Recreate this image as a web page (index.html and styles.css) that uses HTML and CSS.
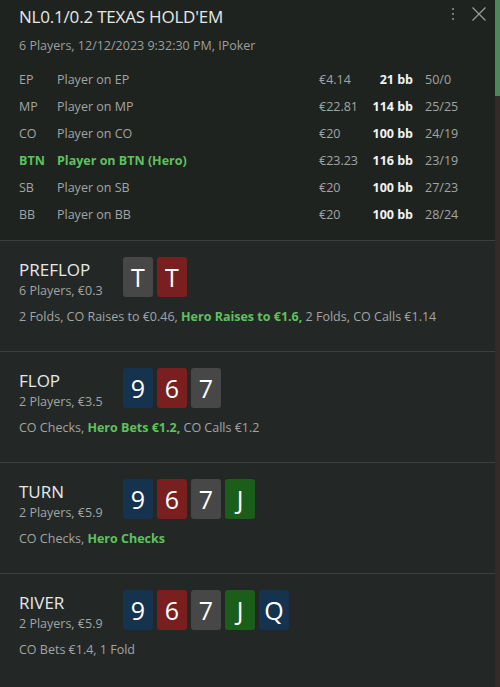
FILE: index.html
```html
<!DOCTYPE html>
<html lang="en">
<head>
  <meta charset="UTF-8">
  <title>Hand History</title>
  <link rel="stylesheet" href="styles.css">
</head>
<body>
  <div class="app">
    <div class="panel">
      <header class="hand-head">
        <div class="head-top">
          <h1>NL0.1/0.2 TEXAS HOLD'EM</h1>
          <div class="tools">
            <svg class="dots" width="4" height="14" viewBox="0 0 4 14"><circle cx="2" cy="2" r="1.1"/><circle cx="2" cy="7" r="1.1"/><circle cx="2" cy="12" r="1.1"/></svg>
            <svg class="close" width="16" height="16" viewBox="0 0 16 16"><path d="M1.5 1.5 L14.5 14.5 M14.5 1.5 L1.5 14.5"/></svg>
          </div>
        </div>
        <div class="meta">6 Players, 12/12/2023 9:32:30 PM, IPoker</div>

        <div class="seats">
          <div class="seat"><span>EP</span><span>Player on EP</span><span>€4.14</span><b>21 bb</b><span class="stat">50/0</span></div>
          <div class="seat"><span>MP</span><span>Player on MP</span><span>€22.81</span><b>114 bb</b><span class="stat">25/25</span></div>
          <div class="seat"><span>CO</span><span>Player on CO</span><span>€20</span><b>100 bb</b><span class="stat">24/19</span></div>
          <div class="seat hero"><span>BTN</span><span>Player on BTN (Hero)</span><span>€23.23</span><b>116 bb</b><span class="stat">23/19</span></div>
          <div class="seat"><span>SB</span><span>Player on SB</span><span>€20</span><b>100 bb</b><span class="stat">27/23</span></div>
          <div class="seat"><span>BB</span><span>Player on BB</span><span>€20</span><b>100 bb</b><span class="stat">28/24</span></div>
        </div>
      </header>

      <section class="street">
        <div class="street-top">
          <div class="street-info">
            <h2>PREFLOP</h2>
            <div class="pot">6 Players, €0.3</div>
          </div>
          <div class="cards">
            <span class="card gray">T</span>
            <span class="card red">T</span>
          </div>
        </div>
        <p class="actions">2 Folds, CO Raises to €0.46, <b>Hero Raises to €1.6,</b> 2 Folds, CO Calls €1.14</p>
      </section>

      <section class="street">
        <div class="street-top">
          <div class="street-info">
            <h2>FLOP</h2>
            <div class="pot">2 Players, €3.5</div>
          </div>
          <div class="cards">
            <span class="card blue">9</span>
            <span class="card red">6</span>
            <span class="card gray">7</span>
          </div>
        </div>
        <p class="actions">CO Checks, <b>Hero Bets €1.2,</b> CO Calls €1.2</p>
      </section>

      <section class="street">
        <div class="street-top">
          <div class="street-info">
            <h2>TURN</h2>
            <div class="pot">2 Players, €5.9</div>
          </div>
          <div class="cards">
            <span class="card blue">9</span>
            <span class="card red">6</span>
            <span class="card gray">7</span>
            <span class="card green">J</span>
          </div>
        </div>
        <p class="actions">CO Checks, <b>Hero Checks</b></p>
      </section>

      <section class="street">
        <div class="street-top">
          <div class="street-info">
            <h2>RIVER</h2>
            <div class="pot">2 Players, €5.9</div>
          </div>
          <div class="cards">
            <span class="card blue">9</span>
            <span class="card red">6</span>
            <span class="card gray">7</span>
            <span class="card green">J</span>
            <span class="card blue">Q</span>
          </div>
        </div>
        <p class="actions">CO Bets €1.4, 1 Fold</p>
      </section>
    </div>

    <div class="scrollbar"><div class="thumb"></div></div>
  </div>
</body>
</html>
```

FILE: styles.css
```css
* {
  margin: 0;
  padding: 0;
  box-sizing: border-box;
}

body {
  background: #232827;
  font-family: "Open Sans", "Noto Sans", sans-serif;
  color: #a2a5a4;
  overflow: hidden;
}

.app {
  display: flex;
  height: 687px;
}

.panel {
  flex: 1;
  min-width: 0;
  background: #232827;
}

.scrollbar {
  width: 5px;
  background: #332b29;
}

.scrollbar .thumb {
  height: 96px;
  background: #4d865a;
}

/* header */

.hand-head {
  background: #1e2320;
  padding: 5px 19px 16px;
  height: 241px;
  border-bottom: 1px solid #3b403e;
}

.head-top {
  display: flex;
  justify-content: space-between;
  align-items: flex-start;
}

h1 {
  font-size: 17px;
  font-weight: 400;
  color: #e6e8e7;
  line-height: 24px;
  letter-spacing: -0.2px;
}

.tools {
  display: flex;
  align-items: center;
  gap: 16px;
  padding-top: 1px;
  margin-right: -11px;
}

.dots {
  fill: #8a8d8c;
}

.close {
  stroke: #9a9d9c;
  stroke-width: 1.2;
  fill: none;
}

.meta {
  font-size: 12.5px;
  line-height: 18px;
  margin-top: 8px;
  color: #9d9f9e;
}

.seats {
  margin-top: 11px;
}

.seat {
  display: grid;
  grid-template-columns: 38px 262px 46px 48px auto;
  height: 27px;
  align-items: center;
  font-size: 12.5px;
}

.seat b {
  text-align: right;
  color: #f2f2f2;
  font-weight: 700;
}

.seat .stat {
  padding-left: 12px;
}

.seat.hero span {
  color: #5fc15d;
  font-weight: 700;
}

.seat.hero span:nth-child(3),
.seat.hero .stat {
  color: #a2a5a4;
  font-weight: 400;
}

/* streets */

.street {
  height: 111px;
  padding: 16px 19px 0;
  border-bottom: 1px solid #3b403e;
}

.street:last-child {
  border-bottom: 0;
}

.street-top {
  display: flex;
}

.street-info {
  width: 104px;
  padding-top: 1px;
}

h2 {
  font-size: 17px;
  font-weight: 400;
  line-height: 24px;
  color: #e6e8e7;
}

.pot {
  font-size: 12.5px;
  line-height: 18px;
}

.cards {
  display: flex;
  gap: 4px;
}

.card {
  width: 30px;
  height: 40px;
  border-radius: 3px;
  color: #fff;
  font-size: 25px;
  line-height: 40px;
  text-align: center;
}

.card.gray { background: #474747; }
.card.red { background: #7a1f1f; }
.card.blue { background: #15324f; }
.card.green { background: #1a5e1a; }

.actions {
  font-size: 12.5px;
  line-height: 18px;
  margin-top: 8px;
}

.actions b {
  color: #5fc15d;
  font-weight: 700;
}
```
